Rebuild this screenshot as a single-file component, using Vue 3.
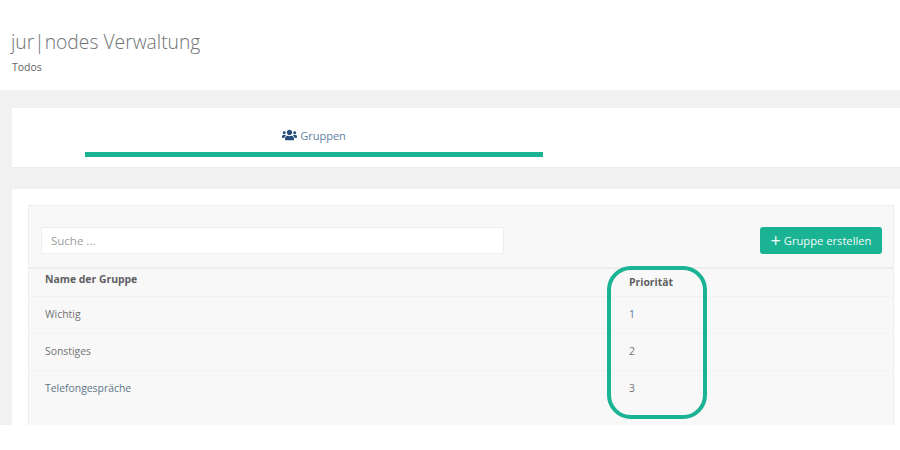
<script setup>
const rows = [
  { name: 'Wichtig', prio: 1, nameClass: '', prioClass: 'link' },
  { name: 'Sonstiges', prio: 2, nameClass: '', prioClass: '' },
  { name: 'Telefongespräche', prio: 3, nameClass: 'link', prioClass: '' },
]
</script>

<template>
  <div class="page">
    <header class="head">
      <h1>jur|nodes Verwaltung</h1>
      <p>Todos</p>
    </header>
    <main class="body">
      <nav class="tabs">
        <div class="tab">
          <span class="tab-label">
            <svg class="users" viewBox="0 0 640 512" aria-hidden="true"><path d="M96 224c35.3 0 64-28.7 64-64s-28.7-64-64-64-64 28.7-64 64 28.7 64 64 64zm448 0c35.3 0 64-28.7 64-64s-28.7-64-64-64-64 28.7-64 64 28.7 64 64 64zm32 32h-64c-17.6 0-33.5 7.1-45.1 18.6 40.3 22.1 68.9 62 75.1 109.4h66c17.7 0 32-14.3 32-32v-32c0-35.3-28.7-64-64-64zm-256 0c61.9 0 112-50.1 112-112S381.9 32 320 32 208 82.1 208 144s50.1 112 112 112zm76.8 32h-8.3c-20.8 10-43.9 16-68.5 16s-47.6-6-68.5-16h-8.3C179.6 288 128 339.6 128 403.2V432c0 26.5 21.5 48 48 48h288c26.5 0 48-21.5 48-48v-28.8c0-63.6-51.6-115.2-115.2-115.2zm-223.7-13.4C161.5 263.1 145.6 256 128 256H64c-35.3 0-64 28.7-64 64v32c0 17.7 14.3 32 32 32h65.9c6.3-47.4 34.9-87.3 75.2-109.4z"/></svg>
            Gruppen
          </span>
        </div>
      </nav>
      <section class="card">
        <div class="panel">
          <div class="toolbar">
            <input class="search" type="text" placeholder="Suche ..." />
            <button class="create" type="button"><span class="plus">+</span> Gruppe erstellen</button>
          </div>
          <div class="row row-head">
            <span>Name der Gruppe</span>
            <span class="prio-head">Priorität</span>
          </div>
          <div v-for="r in rows" :key="r.name" class="row">
            <span :class="r.nameClass">{{ r.name }}</span>
            <span :class="r.prioClass">{{ r.prio }}</span>
          </div>
        </div>
      </section>
      <div class="highlight"></div>
    </main>
  </div>
</template>

<style scoped>
.page {
  position: relative;
  height: 425px;
  overflow: hidden;
  font-family: "Open Sans", "Noto Sans", sans-serif;
  color: #676a6c;
  background: #fff;
}
.head {
  height: 90px;
  box-sizing: border-box;
  padding: 28px 12px 0 11px;
  background: #fff;
}
.head h1 {
  margin: 0;
  font-size: 19.3px;
  line-height: 27px;
  font-weight: 300;
  color: #6f7274;
}
.head p {
  margin: 5px 0 0 1px;
  font-size: 10.5px;
  line-height: 15px;
  color: #5f6264;
}
.body {
  height: 335px;
  box-sizing: border-box;
  padding: 18px 0 0 12px;
  background: #f1f1f1;
}
.tabs {
  height: 60px;
  box-sizing: border-box;
  padding-left: 73px;
  background: #fff;
  border-bottom: 1px solid #ebebeb;
}
.tab {
  width: 458px;
  height: 49px;
  box-sizing: border-box;
  padding-top: 16px;
  border-bottom: 5px solid #1ab394;
  text-align: center;
}
.tab-label {
  display: inline-flex;
  align-items: center;
  gap: 3px;
  font-size: 11px;
  line-height: 17px;
  color: #5f7fa3;
}
.users {
  width: 15px;
  height: 12px;
  fill: #264d7a;
}
.card {
  margin-top: 21px;
  height: 236px;
  box-sizing: border-box;
  padding: 16px 6px 0 16px;
  background: #fff;
}
.panel {
  height: 220px;
  box-sizing: border-box;
  background: #f8f8f8;
  border: 1px solid #eeeeee;
  border-bottom: 0;
}
.toolbar {
  height: 63px;
  box-sizing: border-box;
  display: flex;
  justify-content: space-between;
  padding: 21px 11px 0 12px;
  border-bottom: 2px solid #ededed;
}
.search {
  width: 463px;
  height: 27px;
  box-sizing: border-box;
  padding: 0 9px;
  border: 1px solid #eeeeee;
  border-radius: 2px;
  background: #fff;
  font: 11.5px "Open Sans", "Noto Sans", sans-serif;
  outline: none;
}
.search::placeholder {
  color: #9a9c9e;
  opacity: 1;
}
.create {
  width: 122px;
  height: 27px;
  padding: 0;
  border: 0;
  border-radius: 3px;
  background: #1ab394;
  color: #f2fbf9;
  font: 11.2px "Open Sans", "Noto Sans", sans-serif;
}
.plus {
  font-size: 18px;
  line-height: 12px;
  vertical-align: -2px;
}
.row {
  display: grid;
  grid-template-columns: 584px 1fr;
  height: 37px;
  box-sizing: border-box;
  padding: 0 0 2px 16px;
  align-items: center;
  font-size: 10.4px;
  color: #717375;
  border-bottom: 1px solid #f2f2f2;
}
.row:last-child {
  border-bottom-color: transparent;
}
.row-head {
  height: 28px;
  align-items: start;
  padding-top: 3px;
  padding-bottom: 0;
  font-weight: 700;
  color: #5e6062;
}
.prio-head {
  padding-top: 3px;
}
.link {
  color: #62768a;
}
.highlight {
  position: absolute;
  left: 607px;
  top: 266px;
  width: 100px;
  height: 153px;
  box-sizing: border-box;
  border: 4px solid #1ab394;
  border-radius: 24px;
}
</style>
